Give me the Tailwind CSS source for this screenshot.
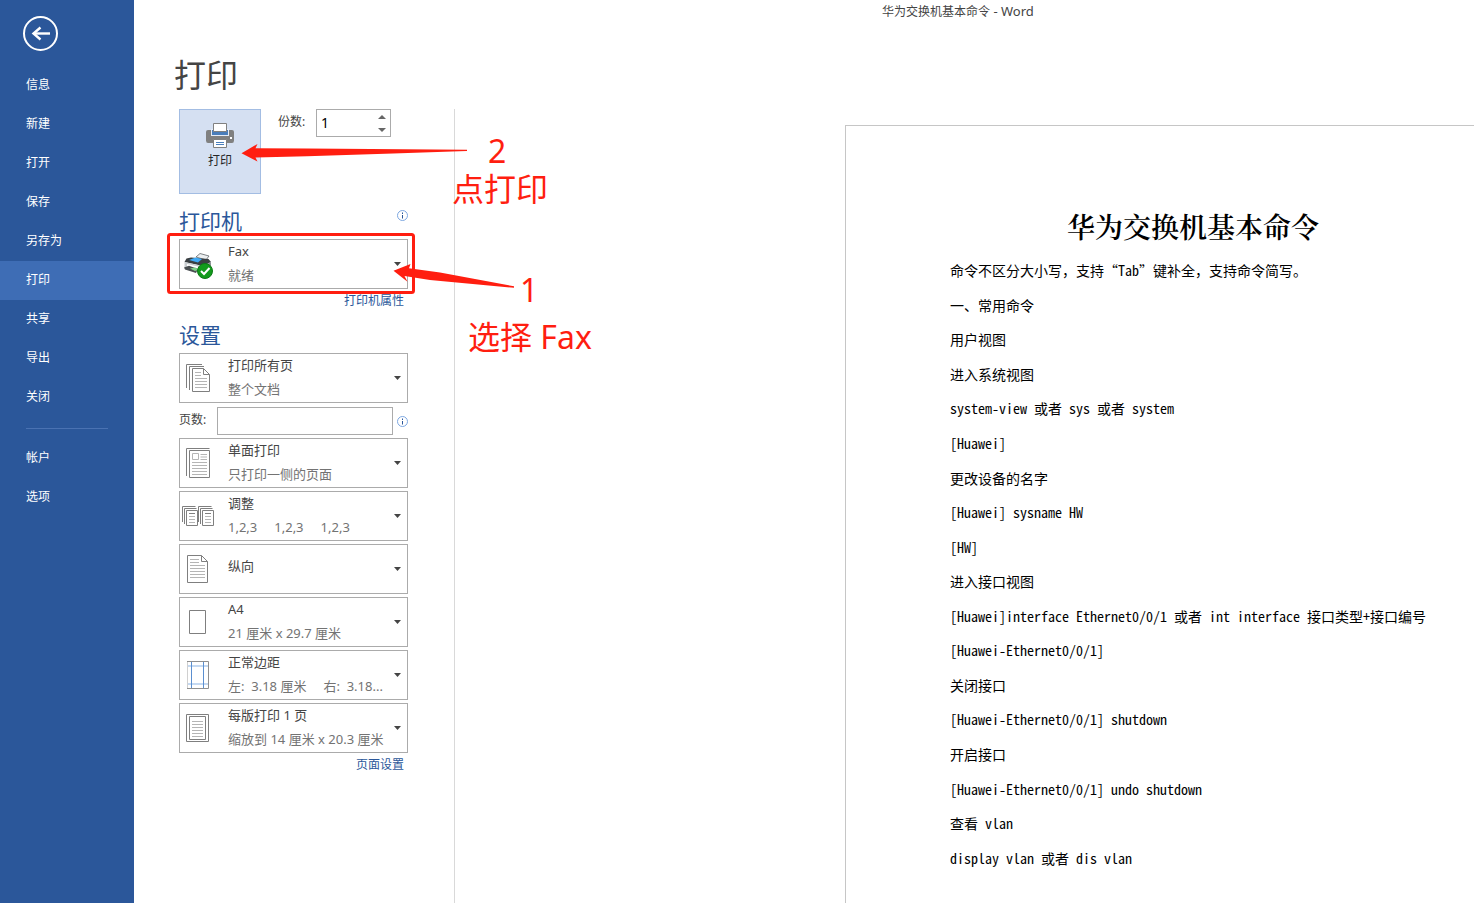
<!DOCTYPE html>
<html lang="zh-CN">
<head>
<meta charset="utf-8">
<title>华为交换机基本命令 - Word</title>
<script src="https://cdn.jsdelivr.net/npm/@tailwindcss/browser@4"></script>
</head>
<body class="relative flex min-h-screen overflow-x-hidden bg-white font-['Noto_Sans','Noto_Sans_CJK_SC',sans-serif] text-[13px] text-[#444]">

<nav class="flex w-[134px] shrink-0 flex-col bg-[#2b579a] text-xs text-white" aria-label="文件">
  <button class="mt-4 mb-[15px] ml-[23px] size-[35px]" aria-label="返回">
    <svg viewBox="0 0 35 35" class="size-full" fill="none" stroke="#fff"><circle cx="17.5" cy="17.5" r="16.5" stroke-width="2"/><path d="M27 17.5H11" stroke-width="2.4"/><path d="M17.5 11.5L10.5 17.5L17.5 23.5" stroke-width="2.4"/></svg>
  </button>
  <a href="#" class="flex h-[39px] items-center px-[26px] pb-0.5">信息</a>
  <a href="#" class="flex h-[39px] items-center px-[26px] pb-0.5">新建</a>
  <a href="#" class="flex h-[39px] items-center px-[26px] pb-0.5">打开</a>
  <a href="#" class="flex h-[39px] items-center px-[26px] pb-0.5">保存</a>
  <a href="#" class="flex h-[39px] items-center px-[26px] pb-0.5">另存为</a>
  <a href="#" class="flex h-[39px] items-center bg-[#3e6db5] px-[26px] pb-0.5" aria-current="page">打印</a>
  <a href="#" class="flex h-[39px] items-center px-[26px] pb-0.5">共享</a>
  <a href="#" class="flex h-[39px] items-center px-[26px] pb-0.5">导出</a>
  <a href="#" class="flex h-[39px] items-center px-[26px] pb-0.5">关闭</a>
  <hr class="mx-[26px] mt-[11px] mb-[10px] border-[#4a72b2]">
  <a href="#" class="flex h-[39px] items-center px-[26px] pb-0.5">帐户</a>
  <a href="#" class="flex h-[39px] items-center px-[26px] pb-0.5">选项</a>
</nav>

<main class="flex min-w-0 flex-1 flex-col">
  <header class="flex h-6 items-center pl-[748px] text-xs whitespace-pre">华为交换机基本命令<span class="text-[13px]"> - Word</span></header>
  <h1 class="flex h-[85px] items-center pt-4 pl-10 text-[32px]">打印</h1>

  <div class="flex flex-1">
    <section class="w-[321px] shrink-0 border-r border-[#d9d9d9] pr-[46px] pl-[45px]">
      <div class="flex items-start">
        <button class="flex h-[85px] w-[82px] flex-col items-center border border-[#a3bde3] bg-[#d5e0f2] pt-[13px] text-xs text-[#262626]">
          <svg viewBox="0 0 28 26" class="h-[26px] w-7"><path d="M0 9Q0 7 2 7H26Q28 7 28 9V17.5Q28 20 26 20H2Q0 20 0 17.5Z" fill="#808080"/><path d="M5 6H23V13H5Z" fill="#e6edf8"/><path d="M6 7H22V12H6Z" fill="#4a7ebb"/><path d="M7.5 .5H20.5V8.5H7.5Z" fill="#fff" stroke="#808080"/><path d="M7.5 16.5H20.5V24.5H7.5Z" fill="#fff" stroke="#808080"/><path d="M10 19.5H18M10 21.5H18" stroke="#4a7ebb"/><path d="M24 14h2v2h-2z" fill="#fff"/></svg>
          <span class="leading-[24px]">打印</span>
        </button>
        <label for="copies" class="ml-[17px] w-[38px] text-xs leading-[26px]">份数:</label>
        <div class="flex h-7 w-[75px] border border-[#ababab]">
          <input id="copies" type="text" value="1" class="w-14 min-w-0 px-1 text-sm text-black outline-none">
          <div class="flex flex-1 flex-col">
            <button class="flex flex-1 items-center justify-center" aria-label="增加"><svg viewBox="0 0 8 4" class="h-1 w-2" fill="#666"><path d="M0 4L4 0L8 4Z"/></svg></button>
            <button class="flex flex-1 items-center justify-center" aria-label="减少"><svg viewBox="0 0 8 4" class="h-1 w-2" fill="#666"><path d="M0 0L4 4L8 0Z"/></svg></button>
          </div>
        </div>
      </div>

      <div class="flex h-[45px] items-start justify-between pt-[11px]">
        <h2 class="text-[21px] leading-[32px] text-[#2b579a]">打印机</h2>
        <button class="mt-[5px]" aria-label="打印机信息"><svg viewBox="0 0 11 11" class="size-[11px]" fill="none"><circle cx="5.5" cy="5.5" r="5" stroke="#7da7e0"/><path d="M5.5 5V8.5M5.5 2.5V4" stroke="#2b579a"/></svg></button>
      </div>
      <button class="flex h-[50px] w-full items-center border border-[#ababab] text-left" aria-haspopup="listbox">
        <svg viewBox="0 0 36 36" class="ml-px size-9 shrink-0">
          <path d="M15 11L19 7.5L28 10L25 14Z" fill="#eceff1" stroke="#5f6568" stroke-width=".8"/>
          <path d="M5.5 12.5L10 11.5L27.5 13L30 16L22 20L3.5 16Z" fill="#3a3f42"/>
          <path d="M8 14L14.5 11.5L21 13L17 16.5Z" fill="#3fa9f5"/>
          <path d="M3.5 16L19 19.5L19 26.5L3.5 21.5Z" fill="#c9ced1"/>
          <path d="M6 18L17 20.5V23L6 20.5Z" fill="#fff"/>
          <path d="M3 21.5L8 19.8L17 23L15 27L4 23.5Z" fill="#4a4f52"/>
          <path d="M9 22.5L14.5 21.5L17 24L14 25Z" fill="#7fd08a"/>
          <path d="M22 20L30 16V20L20 25Z" fill="#8b9194"/>
          <circle cx="24" cy="25" r="7.5" fill="#129a1c" stroke="#0b7a14"/>
          <path d="M20 25L23 28L28.5 22" fill="none" stroke="#fff" stroke-width="2"/>
        </svg>
        <span class="mb-0.5 ml-[11px] flex-1 leading-[24px]"><span class="block">Fax</span><span class="block text-[#737373]">就绪</span></span>
        <svg viewBox="0 0 7 4" class="mr-[6px] h-1 w-[7px]" fill="#444"><path d="M0 0H7L3.5 4Z"/></svg>
      </button>
      <div class="flex h-[23px] items-center justify-end pr-1"><a href="#" class="text-xs text-[#2b579a]">打印机属性</a></div>

      <h2 class="h-[41px] pt-[7px] text-[21px] leading-[32px] text-[#2b579a]">设置</h2>
      <button class="flex h-[50px] w-full items-center border border-[#ababab] text-left" aria-haspopup="listbox">
        <svg viewBox="0 0 36 36" class="ml-px size-9 shrink-0" fill="none" stroke="#7f7f7f"><path d="M5.5 28V4.5H21M8.5 30V6.5H23M11.5 8.5H22.5L28.5 14.5V31.5H11.5ZM22.5 8.5V14.5H28.5"/><path d="M14 12.5H20M14 15.5H20M14 18.5H26M14 21.5H26M14 24.5H26M14 27.5H26" stroke="#b5b5b5"/></svg>
        <span class="mb-0.5 ml-[11px] flex-1 leading-[24px]"><span class="block">打印所有页</span><span class="block text-[#737373]">整个文档</span></span>
        <svg viewBox="0 0 7 4" class="mr-[6px] h-1 w-[7px]" fill="#444"><path d="M0 0H7L3.5 4Z"/></svg>
      </button>
      <div class="mt-1 mb-[3px] flex h-7 items-start">
        <label for="pages" class="w-[38px] shrink-0 text-xs leading-[26px]">页数:</label>
        <input id="pages" type="text" class="h-7 w-[176px] border border-[#ababab] px-1 outline-none">
        <button class="mt-[9px] ml-1" aria-label="页数信息"><svg viewBox="0 0 11 11" class="size-[11px]" fill="none"><circle cx="5.5" cy="5.5" r="5" stroke="#7da7e0"/><path d="M5.5 5V8.5M5.5 2.5V4" stroke="#2b579a"/></svg></button>
      </div>

      <div class="flex flex-col gap-[3px]">
        <button class="flex h-[50px] w-full items-center border border-[#ababab] text-left" aria-haspopup="listbox">
          <svg viewBox="0 0 36 36" class="ml-px size-9 shrink-0" fill="none" stroke="#7f7f7f"><path d="M5.5 31V3.5H28.5M8.5 5.5H28.5V32.5H8.5Z"/><path d="M11.5 8.5H17.5V14.5H11.5ZM19.5 9.5H26M19.5 12H26M19.5 14.5H26M11 17.5H26M11 20.5H26M11 23.5H26M11 26.5H26M11 29.5H26" stroke="#b5b5b5"/></svg>
          <span class="mb-0.5 ml-[11px] flex-1 leading-[24px]"><span class="block">单面打印</span><span class="block text-[#737373]">只打印一侧的页面</span></span>
          <svg viewBox="0 0 7 4" class="mr-[6px] h-1 w-[7px]" fill="#444"><path d="M0 0H7L3.5 4Z"/></svg>
        </button>
        <button class="flex h-[50px] w-full items-center border border-[#ababab] text-left" aria-haspopup="listbox">
          <svg viewBox="0 0 36 36" class="ml-px size-9 shrink-0" fill="none" stroke="#7f7f7f"><path d="M1.5 24V8.5H14.5M3.5 26V10.5H15.5M5.5 12.5H16.5V27.5H5.5ZM17.5 24V8.5H30.5M19.5 26V10.5H31.5M21.5 12.5H32.5V27.5H21.5Z"/><path d="M8 15.5H14M24 15.5H30" stroke="#7f7f7f"/><path d="M8 18.5H14M8 21.5H14M8 24.5H14M24 18.5H30M24 21.5H30M24 24.5H30" stroke="#b5b5b5"/></svg>
          <span class="mb-0.5 ml-[11px] flex-1 leading-[24px]"><span class="block">调整</span><span class="flex gap-[17px] text-[#737373]"><span>1,2,3</span><span>1,2,3</span><span>1,2,3</span></span></span>
          <svg viewBox="0 0 7 4" class="mr-[6px] h-1 w-[7px]" fill="#444"><path d="M0 0H7L3.5 4Z"/></svg>
        </button>
        <button class="flex h-[50px] w-full items-center border border-[#ababab] text-left" aria-haspopup="listbox">
          <svg viewBox="0 0 36 36" class="ml-px size-9 shrink-0" fill="none" stroke="#7f7f7f"><path d="M6.5 4.5H20.5L26.5 10.5V31.5H6.5ZM20.5 4.5V10.5H26.5"/><path d="M9 8.5H18M9 11.5H18M9 14.5H24M9 17.5H24M9 20.5H24M9 23.5H24M9 26.5H24" stroke="#b5b5b5"/></svg>
          <span class="mb-1.5 ml-[11px] flex-1 leading-[24px]">纵向</span>
          <svg viewBox="0 0 7 4" class="mr-[6px] h-1 w-[7px]" fill="#444"><path d="M0 0H7L3.5 4Z"/></svg>
        </button>
        <button class="flex h-[50px] w-full items-center border border-[#ababab] text-left" aria-haspopup="listbox">
          <svg viewBox="0 0 36 36" class="ml-px size-9 shrink-0" fill="none" stroke="#7f7f7f"><path d="M8.5 6.5H24.5V29.5H8.5Z"/></svg>
          <span class="mb-0.5 ml-[11px] flex-1 leading-[24px]"><span class="block">A4</span><span class="block text-[#737373]">21 厘米 x 29.7 厘米</span></span>
          <svg viewBox="0 0 7 4" class="mr-[6px] h-1 w-[7px]" fill="#444"><path d="M0 0H7L3.5 4Z"/></svg>
        </button>
        <button class="flex h-[50px] w-full items-center border border-[#ababab] text-left" aria-haspopup="listbox">
          <svg viewBox="0 0 36 36" class="ml-px size-9 shrink-0" fill="none"><path d="M7 9H27M7 27H27" stroke="#c5d9f1" stroke-width="2"/><path d="M6.5 31V5" stroke="#d0d0d0"/><path d="M6 4.5H27.5V31.5H6" stroke="#8f8f8f"/><path d="M10.5 5V31M22.5 5V31" stroke="#5b8fd0"/></svg>
          <span class="mb-0.5 ml-[11px] flex-1 leading-[24px] whitespace-pre"><span class="block">正常边距</span><span class="flex gap-[17px] text-[#737373]"><span>左:  3.18 厘米</span><span>右:  3.18...</span></span></span>
          <svg viewBox="0 0 7 4" class="mr-[6px] h-1 w-[7px]" fill="#444"><path d="M0 0H7L3.5 4Z"/></svg>
        </button>
        <button class="flex h-[50px] w-full items-center border border-[#ababab] text-left" aria-haspopup="listbox">
          <svg viewBox="0 0 36 36" class="ml-px size-9 shrink-0" fill="none" stroke="#7f7f7f"><path d="M5.5 4.5H27.5V31.5H5.5ZM8.5 6.5H24.5V29.5H8.5Z"/><path d="M11 11.5H22M11 14.5H22M11 17.5H22M11 20.5H22M11 23.5H22M11 26.5H22" stroke="#b5b5b5"/></svg>
          <span class="mb-0.5 ml-[11px] min-w-0 flex-1 leading-[24px] whitespace-nowrap"><span class="block">每版打印 1 页</span><span class="block text-[#737373]">缩放到 14 厘米 x 20.3 厘米</span></span>
          <svg viewBox="0 0 7 4" class="mr-[6px] h-1 w-[7px] shrink-0" fill="#444"><path d="M0 0H7L3.5 4Z"/></svg>
        </button>
      </div>
      <div class="flex h-[23px] items-center justify-end pr-1"><a href="#" class="text-xs text-[#2b579a]">页面设置</a></div>
    </section>

    <section class="min-w-0 flex-1 pt-4 pl-[390px]" aria-label="打印预览">
      <article class="h-full border-t border-l border-[#c6c6c6] pt-20 pl-[104px] font-['Noto_Sans_Mono_CJK_SC','Noto_Sans_CJK_SC','Liberation_Mono',monospace] text-sm text-black">
        <div class="w-[486px] whitespace-nowrap">
          <h2 class="text-center font-['Noto_Serif_CJK_SC','Noto_Sans_CJK_SC',serif] text-[28px] leading-[40px] font-semibold">华为交换机基本命令</h2>
          <div class="mt-[7px] grid h-[622px] auto-rows-fr items-center">
            <p>命令不区分大小写，支持“Tab”键补全，支持命令简写。</p>
            <p>一、常用命令</p>
            <p>用户视图</p>
            <p>进入系统视图</p>
            <p>system-view 或者 sys 或者 system</p>
            <p>[Huawei]</p>
            <p>更改设备的名字</p>
            <p>[Huawei] sysname HW</p>
            <p>[HW]</p>
            <p>进入接口视图</p>
            <p>[Huawei]interface Ethernet0/0/1 或者 int interface 接口类型+接口编号</p>
            <p>[Huawei-Ethernet0/0/1]</p>
            <p>关闭接口</p>
            <p>[Huawei-Ethernet0/0/1] shutdown</p>
            <p>开启接口</p>
            <p>[Huawei-Ethernet0/0/1] undo shutdown</p>
            <p>查看 vlan</p>
            <p>display vlan 或者 dis vlan</p>
          </div>
        </div>
      </article>
    </section>
  </div>
</main>

<!-- Tutorial annotations drawn over the page -->
<div class="pointer-events-none absolute top-0 left-0 h-[400px] w-[640px] text-[32px] leading-[32px] text-[#ff1e10]">
  <svg viewBox="0 0 640 400" class="absolute inset-0 size-full" fill="#ff1e10">
    <rect x="168.5" y="234.5" width="245" height="58" rx="2" fill="none" stroke="#ff1e10" stroke-width="3"/>
    <path d="M241.5 153.3L257.5 144L255.5 148.3L307 148.5L467 149.8L467 151L393 153.5L307 156.3L255.5 157.5L257.5 161.5Z"/>
    <path d="M393.5 270.7L410.5 264L409 268.2L440 272.5L514 286.3L514 287.8L430 280L404.5 276L407.5 281.7Z"/>
  </svg>
  <span class="absolute top-[135px] left-[488px]">2</span>
  <span class="absolute top-[173px] left-[452px] whitespace-nowrap">点打印</span>
  <span class="absolute top-[274px] left-[520px]">1</span>
  <span class="absolute top-[321px] left-[468px] whitespace-nowrap">选择 Fax</span>
</div>
</body>
</html>
